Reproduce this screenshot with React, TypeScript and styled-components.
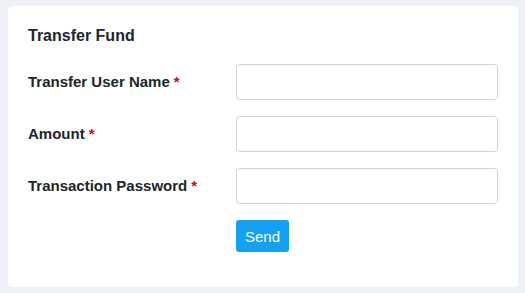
import { Fragment } from "react";
import styled, { createGlobalStyle } from "styled-components";

const GlobalStyle = createGlobalStyle`
  html, body {
    margin: 0;
    padding: 0;
    background: #edf0f4;
    font-family: "Liberation Sans", Arial, sans-serif;
  }
`;

const Page = styled.div`
  padding: 6px 7px 6px 8px;
`;

const Card = styled.div`
  background: #ffffff;
  border-radius: 4px;
  width: 510px;
  height: 281px;
  box-sizing: border-box;
  padding: 18px 20px 20px 20px;
`;

const Title = styled.h2`
  margin: 0 0 16px 0;
  font-size: 16px;
  line-height: 24px;
  font-weight: 700;
  color: #212529;
`;

const Form = styled.form`
  display: grid;
  grid-template-columns: 208px 1fr;
  row-gap: 16px;
  align-items: center;
`;

const Label = styled.label`
  font-size: 15px;
  line-height: 20px;
  padding-bottom: 1px;
  font-weight: 700;
  color: #212529;
`;

const Required = styled.span`
  color: #e3000f;
  margin-left: 4px;
`;

const Input = styled.input`
  box-sizing: border-box;
  width: 100%;
  height: 36px;
  border: 1px solid #ced4da;
  border-radius: 4px;
  padding: 6px 12px;
  font-size: 15px;
  font-family: inherit;
  outline: none;
`;

const Button = styled.button`
  grid-column: 2;
  justify-self: start;
  height: 32px;
  padding: 0 9px;
  border: none;
  border-radius: 3px;
  background: #16a0f2;
  color: #ffffff;
  font-family: inherit;
  font-size: 15px;
  cursor: pointer;
`;

const fields = [
  { id: "username", label: "Transfer User Name", type: "text" },
  { id: "amount", label: "Amount", type: "text" },
  { id: "password", label: "Transaction Password", type: "password" },
];

export default function App() {
  return (
    <>
      <GlobalStyle />
      <Page>
        <Card>
          <Title>Transfer Fund</Title>
          <Form onSubmit={(e) => e.preventDefault()}>
            {fields.map((f) => (
              <Fragment key={f.id}>
                <Label htmlFor={f.id}>
                  {f.label}
                  <Required>*</Required>
                </Label>
                <Input id={f.id} type={f.type} />
              </Fragment>
            ))}
            <Button type="submit">Send</Button>
          </Form>
        </Card>
      </Page>
    </>
  );
}
